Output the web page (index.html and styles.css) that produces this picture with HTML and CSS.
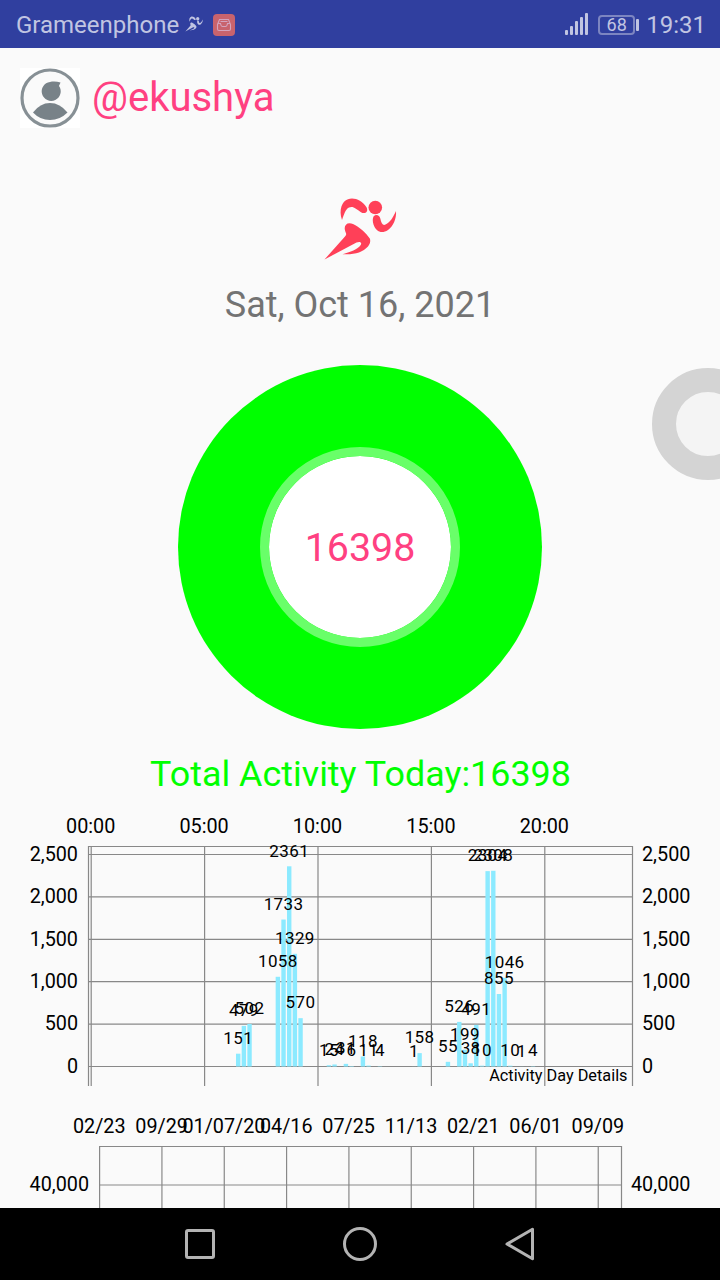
FILE: index.html
```html
<!DOCTYPE html>
<html lang="en">

<head>
    <meta charset="UTF-8">
    <meta name="viewport" content="width=device-width, initial-scale=1.0">
    <title>Activity</title>
    <link rel="stylesheet" href="styles.css">
</head>

<body>
    <div class="screen">
        <!-- Status bar -->
        <div class="status-bar">
            <span class="carrier">Grameenphone</span>
            <svg class="status-run" width="18" height="16" viewBox="0 0 74 64">
                <use href="#runner" />
            </svg>
            <svg class="status-app" width="22" height="22" viewBox="0 0 22 22">
                <rect width="22" height="22" rx="4" fill="#c8636d" />
                <path d="M4.5 10.5 6.500 5.500h9l2 5v4.500q0 1.500-1.500 1.500H6q-1.500 0-1.500-1.500zM5 9.500h2.500q.5 3 2 3h3q1.500 0 2-3H17M7.500 7.500h7" fill="none" stroke="#d3a3bd" stroke-width="1.100" />
            </svg>
            <svg class="signal" width="24" height="24" viewBox="0 0 24 24" fill="#c1c5e2">
                <rect x="0" y="18" width="3" height="5" rx="1" />
                <rect x="5" y="14" width="3" height="9" rx="1" />
                <rect x="10" y="9" width="3" height="14" rx="1" />
                <rect x="15" y="5" width="3" height="18" rx="1" />
                <rect x="20" y="1" width="3" height="22" rx="1" />
            </svg>
            <span class="battery">68</span>
            <span class="clock">19:31</span>
        </div>

        <div class="content">
            <div class="user">
                <svg class="avatar" width="60" height="60" viewBox="0 0 60 60">
                    <rect width="60" height="60" fill="#fff" />
                    <circle cx="30" cy="30" r="28" fill="#fafafa" stroke="#879095" stroke-width="3.200" />
                    <path d="M30 14c3-.8 7-.6 10.500.5-.5 1.500-1.300 2.500-1.500 3.500a9.500 9.500 0 1 1-9-4z" fill="#788288" />
                    <path d="M13 44.500Q20 35 30 35t17.500 9.500Q40 52 30 52t-17-7.500z" fill="#788288" />
                </svg>
                <span class="username">@ekushya</span>
            </div>

            <svg class="run-logo" width="74" height="64" viewBox="0 0 74 64">
                <g id="runner">
                    <path d="M19 23C15.500 13 19 4 25 2.200c6-2 14 .8 18.500 8 2.500 5-2 7.200-5.500 5-5-3.500-8-6.700-12-4.700-3.800 2-4.700 6.500-7 12.500z" />
                    <circle cx="52.300" cy="10.500" r="6.800" />
                    <path d="M50.500 19.500c2.500-2.500 6-1.500 6.800 2 1 5 2.700 7.500 5.200 6.100 5-2.400 7.700-7.500 10.500-13.600.7 8-3 15.500-8 18.900-6.500 4.400-12 1.500-14.500-5.500-1-3-1-5.900 0-7.900z" />
                    <path d="M22.500 35c-2.500-6 1-10.500 7.500-8 6.500 3 13 9 16.800 14.500 1 2.500.2 5.500-1.800 8-5.500 6-14 8.500-25.500 7.700 9-2.500 15.500-5.200 18.200-9.200 1.500-2.500-.7-4-4.200-2.500L1.500 62.500 22 39.500c1.500-1.500 1.500-2.500.5-4.500z" />
                </g>
            </svg>
            <div class="date">Sat, Oct 16, 2021</div>

            <div class="pie">
                <div class="pie-hole">16398</div>
            </div>
            <div class="total">Total Activity Today:16398</div>

            <svg id="dayChart" class="chart" width="720" height="290"></svg>
            <svg id="historyChart" class="chart" width="720" height="290"></svg>
        </div>

        <div class="nav-bar">
            <svg width="160" height="72" viewBox="0 0 160 72"><rect x="66.500" y="22.500" width="27" height="27" rx="1.500" /></svg>
            <svg width="160" height="72" viewBox="0 0 160 72"><circle cx="80" cy="36" r="15.500" /></svg>
            <svg width="160" height="72" viewBox="0 0 160 72"><path d="M67 36 92.500 21.200V50.800z" /></svg>
        </div>

        <div class="float-ball"></div>
    </div>

    <script>
        // [quarter of an hour, steps]
        const steps = [
            [26, 151], [27, 479], [28, 502],
            [33, 1058], [34, 1733], [35, 2361], [36, 1329], [37, 570],
            [42, 15], [43, 24], [45, 31], [46, 6], [48, 118], [49, 11], [51, 4],
            [57, 1], [58, 158],
            [63, 55], [65, 526], [66, 199], [67, 38], [68, 491], [69, 10],
            [70, 2304], [71, 2308], [72, 855], [73, 1046], [74, 10], [76, 1], [78, 4]
        ];

        function line(x1, y1, x2, y2) {
            return `<line x1="${x1}" y1="${y1}" x2="${x2}" y2="${y2}" />`;
        }

        function text(x, y, cls, value) {
            return `<text x="${x}" y="${y}" class="${cls}">${value}</text>`;
        }

        function drawDayChart() {
            const zero = 260.5;
            const unit = 0.0848;
            let grid = line(88, 40.5, 633, 40.5) + line(88.5, 40, 88.5, 280) + line(632.5, 40, 632.5, 280);
            let labels = '';

            ['00:00', '05:00', '10:00', '15:00', '20:00'].forEach((hour, i) => {
                const x = 91.2 + i * 113.4;
                grid += line(x, 40, x, 280);
                labels += text(x - 0.5, 27, 'axis middle', hour);
            });

            for (let v = 0; v <= 2500; v += 500) {
                const y = zero - v * unit;
                grid += line(88, y, 633, y);
                labels += text(78, y + 6.2, 'axis end', v.toLocaleString('en-US'));
                labels += text(642, y + 6.2, 'axis', v.toLocaleString('en-US'));
            }

            let bars = '';
            steps.forEach(([slot, value]) => {
                const x = 90.8 + slot * 5.669;
                const y = zero - value * unit;
                bars += `<rect x="${x - 2.2}" y="${y}" width="4.4" height="${value * unit}" />`;
                labels += text(x, y - 9.7, 'value middle', value);
            });

            labels += text(627.5, 275, 'desc end', 'Activity Day Details');
            document.getElementById('dayChart').innerHTML =
                `<g class="grid">${grid}</g><g class="bars">${bars}</g>${labels}`;
        }

        function drawHistoryChart() {
            let grid = line(99, 50.5, 622, 50.5) + line(621.5, 50, 621.5, 290) + line(99, 89, 622, 89);
            let labels = text(89, 95, 'axis end', '40,000') + text(631, 95, 'axis', '40,000');

            ['02/23', '09/29', '01/07/20', '04/16', '07/25', '11/13', '02/21', '06/01', '09/09'].forEach((day, i) => {
                const x = 99.6 + i * 62.33;
                grid += line(x, 50, x, 290);
                labels += text(x - 0.3, 37, 'axis middle', day);
            });

            document.getElementById('historyChart').innerHTML = `<g class="grid">${grid}</g>${labels}`;
        }

        drawDayChart();
        drawHistoryChart();
    </script>
</body>

</html>
```
FILE: styles.css
```css
body {
    margin: 0;
    font-family: Roboto, sans-serif;
    background-color: #fafafa;
}

.screen {
    position: relative;
    display: flex;
    flex-direction: column;
    width: 720px;
    height: 1280px;
    overflow: hidden;
}

/* Status bar */

.status-bar {
    display: flex;
    align-items: center;
    flex: none;
    box-sizing: border-box;
    height: 48px;
    padding: 2px 15px 0 16px;
    background-color: #303f9f;
    color: #c1c5e2;
    font-size: 24px;
}

.status-run {
    margin: -3px 0 0 6px;
    fill: #c1c5e2;
}

.status-app {
    margin-left: 10px;
}

.signal {
    margin: -2px 9px 0 auto;
}

.battery {
    position: relative;
    box-sizing: border-box;
    width: 37px;
    height: 20px;
    margin: -1px 11px 0 0;
    border: 2px solid #7c85c1;
    border-radius: 4px;
    font-size: 18px;
    line-height: 16px;
    text-align: center;
}

.battery::after {
    content: "";
    position: absolute;
    top: 2px;
    right: -6px;
    width: 3px;
    height: 12px;
    border-radius: 1px;
    background-color: #c1c5e2;
}

.clock {
    margin-right: -1px;
}

/* Content */

.content {
    display: flex;
    flex-direction: column;
    align-items: center;
    flex: 1;
    min-height: 0;
    overflow: hidden;
}

.user {
    display: flex;
    align-items: center;
    align-self: stretch;
    flex: none;
    padding: 20px 20px 0;
}

.username {
    margin-left: 12px;
    color: #ff4081;
    font-size: 40px;
    line-height: 60px;
}

.run-logo {
    flex: none;
    margin-top: 69px;
    fill: #ff4058;
}

.date {
    flex: none;
    margin-top: 23px;
    color: #737373;
    font-size: 36px;
    line-height: 42px;
}

.pie {
    display: flex;
    align-items: center;
    justify-content: center;
    flex: none;
    width: 364px;
    height: 364px;
    margin-top: 39px;
    border-radius: 50%;
    background-color: #00ff00;
}

.pie-hole {
    width: 182px;
    height: 182px;
    border: 9px solid #69ff69;
    border-radius: 50%;
    background-color: #fff;
    background-clip: padding-box;
    color: #ff4081;
    font-size: 39.4px;
    line-height: 184px;
    text-align: center;
}

.total {
    flex: none;
    margin-top: 24px;
    padding-left: 1px;
    color: #00ff00;
    font-size: 35.9px;
    line-height: 42px;
}

/* Charts */

.chart {
    flex: none;
}

#dayChart {
    margin-top: 11px;
}

.grid line {
    stroke: #888;
    stroke-width: 1.2;
}

.bars rect {
    fill: #8ceaff;
}

.axis {
    font-size: 19.8px;
}

.value {
    font-size: 17px;
    letter-spacing: 0.4px;
}

.desc {
    font-size: 16.3px;
}

.middle {
    text-anchor: middle;
}

.end {
    text-anchor: end;
}

/* Navigation bar */

.nav-bar {
    display: flex;
    justify-content: center;
    flex: none;
    height: 72px;
    background-color: #000;
}

.nav-bar svg {
    fill: none;
    stroke: #b3b3b3;
    stroke-width: 3;
    stroke-linejoin: round;
}

.float-ball {
    position: absolute;
    top: 368px;
    left: 652px;
    box-sizing: border-box;
    width: 112px;
    height: 112px;
    border: 24px solid #d4d4d4;
    border-radius: 50%;
    background-color: #f4f4f4;
}
```
